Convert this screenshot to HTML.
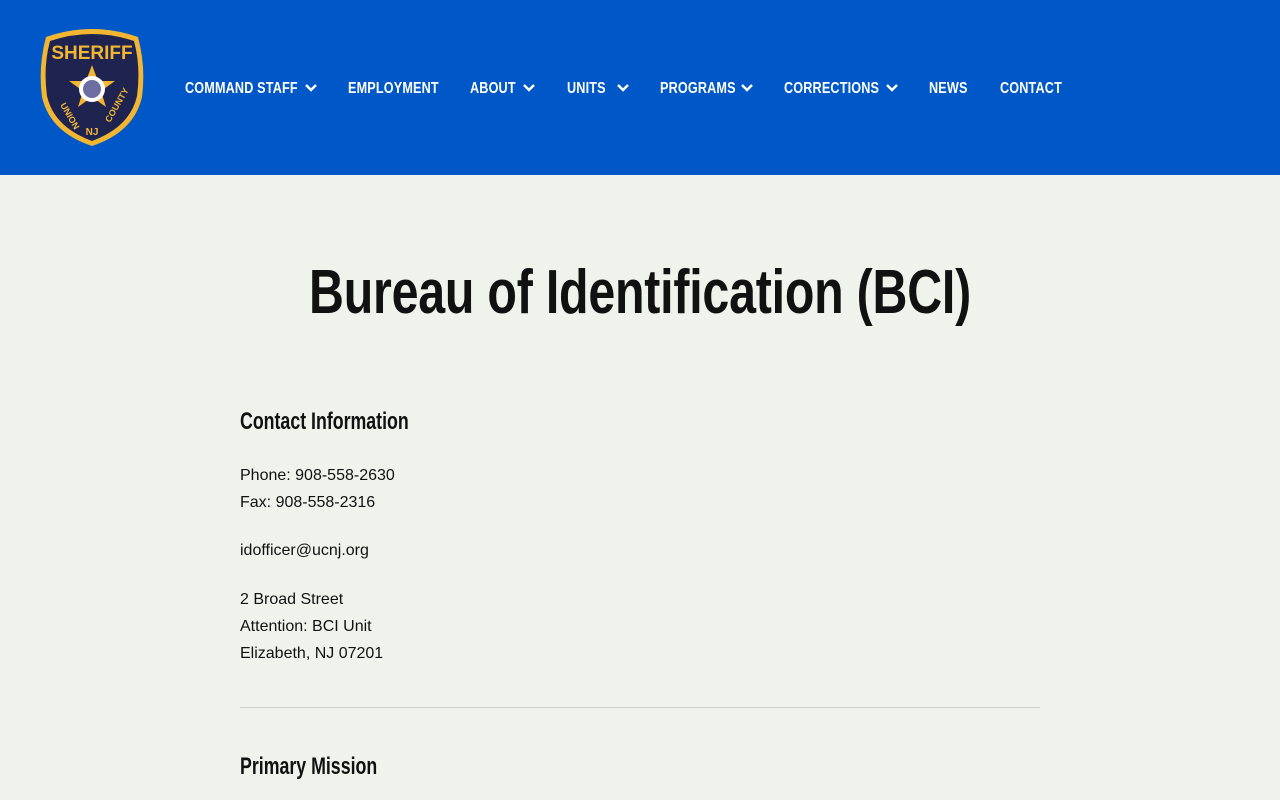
<!DOCTYPE html>
<html><head><style>
body{margin:0;width:1280px;height:800px;overflow:hidden;background:#f0f3ec;font-family:"Liberation Sans",sans-serif;color:#111;position:relative}
header{position:absolute;left:0;top:0;width:1280px;height:175px;background:#0057c8}
.n{position:absolute;top:80px;color:#fff;font-weight:bold;font-size:16px;white-space:nowrap;transform-origin:left center;transform:scaleX(0.79);letter-spacing:0.2px}
.cv{position:absolute;top:83px}
.abs{position:absolute;white-space:nowrap}
h1{position:absolute;left:0;width:1280px;top:257px;margin:0;text-align:center;font-size:62px;font-weight:bold;transform:scaleX(0.78);letter-spacing:-0.3px}
.h2{font-size:24px;font-weight:bold;transform-origin:left center;transform:scaleX(0.74)}
.p{font-size:16px;line-height:27px}
</style></head><body>
<header>
<svg style="position:absolute;left:38px;top:27px" width="109" height="121" viewBox="0 0 109 121">
<path d="M8 10 Q54 -6 100 10 Q108 40 104 70 Q96 105 54 119 Q12 105 4 70 Q0 40 8 10Z" fill="#f2b632"/>
<path d="M12 14 Q54 0 96 14 Q103 40 99 69 Q92 100 54 114 Q16 100 9 69 Q5 40 12 14Z" fill="#1e2350"/>
<text x="54" y="32" text-anchor="middle" font-family="Liberation Sans" font-weight="bold" font-size="19" fill="#f2b632">SHERIFF</text>
<polygon points="54,38 60,54 77,54 63,64 68,80 54,70 40,80 45,64 31,54 48,54" fill="#f2b632"/>
<circle cx="54" cy="62" r="13" fill="#fff"/><circle cx="54" cy="62" r="9" fill="#6a6ea0"/>
<text x="22" y="78" font-family="Liberation Sans" font-weight="bold" font-size="9" fill="#f2b632" transform="rotate(60 22 78)">UNION</text>
<text x="72" y="96" font-family="Liberation Sans" font-weight="bold" font-size="9" fill="#f2b632" transform="rotate(-60 72 96)">COUNTY</text>
<text x="54" y="108" text-anchor="middle" font-family="Liberation Sans" font-weight="bold" font-size="10" fill="#f2b632">NJ</text>
</svg>
<div class="n" style="left:185px">COMMAND STAFF</div>
<div class="n" style="left:348px">EMPLOYMENT</div>
<div class="n" style="left:470px">ABOUT</div>
<div class="n" style="left:567px">UNITS</div>
<div class="n" style="left:660px">PROGRAMS</div>
<div class="n" style="left:784px">CORRECTIONS</div>
<div class="n" style="left:929px">NEWS</div>
<div class="n" style="left:1000px">CONTACT</div>
<svg class="cv" style="left:304px" width="14" height="9" viewBox="0 0 14 9"><path d="M2 2 L7 7 L12 2" stroke="#fff" stroke-width="2.5" fill="none"/></svg>
<svg class="cv" style="left:522px" width="14" height="9" viewBox="0 0 14 9"><path d="M2 2 L7 7 L12 2" stroke="#fff" stroke-width="2.5" fill="none"/></svg>
<svg class="cv" style="left:616px" width="14" height="9" viewBox="0 0 14 9"><path d="M2 2 L7 7 L12 2" stroke="#fff" stroke-width="2.5" fill="none"/></svg>
<svg class="cv" style="left:740px" width="14" height="9" viewBox="0 0 14 9"><path d="M2 2 L7 7 L12 2" stroke="#fff" stroke-width="2.5" fill="none"/></svg>
<svg class="cv" style="left:885px" width="14" height="9" viewBox="0 0 14 9"><path d="M2 2 L7 7 L12 2" stroke="#fff" stroke-width="2.5" fill="none"/></svg>
</header>
<h1>Bureau of Identification (BCI)</h1>
<div class="abs h2" style="left:240px;top:408px">Contact Information</div>
<div class="abs p" style="left:240px;top:462px">Phone: 908-558-2630<br>Fax: 908-558-2316</div>
<div class="abs p" style="left:240px;top:537px">idofficer@ucnj.org</div>
<div class="abs p" style="left:240px;top:586px">2 Broad Street<br>Attention: BCI Unit<br>Elizabeth, NJ 07201</div>
<div class="abs" style="left:240px;top:707px;width:800px;height:1px;background:#cfd2cc"></div>
<div class="abs h2" style="left:240px;top:753px">Primary Mission</div>
</body></html>
